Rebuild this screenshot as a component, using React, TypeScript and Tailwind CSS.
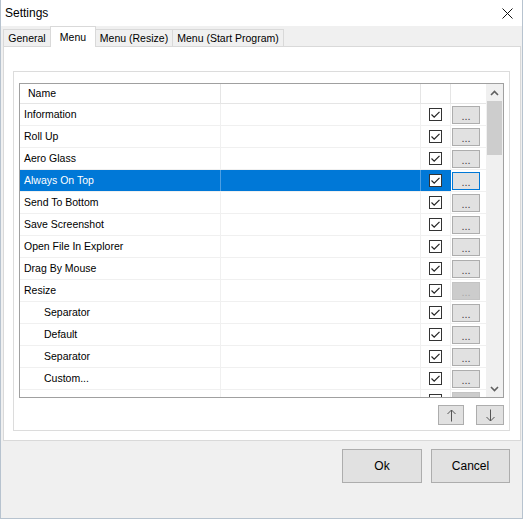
import React from 'react';

type Row = { label: string; indent?: boolean; selected?: boolean; disabled?: boolean; partial?: boolean };

const rows: Row[] = [
  { label: 'Information' },
  { label: 'Roll Up' },
  { label: 'Aero Glass' },
  { label: 'Always On Top', selected: true },
  { label: 'Send To Bottom' },
  { label: 'Save Screenshot' },
  { label: 'Open File In Explorer' },
  { label: 'Drag By Mouse' },
  { label: 'Resize', disabled: true },
  { label: 'Separator', indent: true },
  { label: 'Default', indent: true },
  { label: 'Separator', indent: true },
  { label: 'Custom...', indent: true },
  { label: '', indent: true, disabled: true, partial: true },
];

function CheckBox() {
  return (
    <div className="w-[13px] h-[13px] border border-[#333333] bg-white flex items-center justify-center">
      <svg width="11" height="11" viewBox="0 0 11 11">
        <path d="M1.5 5.5 L4.2 8.2 L9.5 2.8" fill="none" stroke="#222" strokeWidth="1.2" />
      </svg>
    </div>
  );
}

function DotsButton({ selected, disabled, hideText }: { selected?: boolean; disabled?: boolean; hideText?: boolean }) {
  return (
    <div
      className={
        'w-[28px] h-[18px] border flex items-center justify-center text-[11px] leading-none pt-[3px] ' +
        (disabled
          ? 'bg-[#cccccc] border-[#c4c4c4] text-[#a8a8a8]'
          : selected
          ? 'bg-[#e1e1e1] border-[#0078d7] text-[#444]'
          : 'bg-[#e1e1e1] border-[#adadad] text-[#444]')
      }
    >
      {hideText ? '' : '...'}
    </div>
  );
}

function Chevron({ down }: { down?: boolean }) {
  return (
    <svg width="9" height="6" viewBox="0 0 9 6">
      <path
        d={down ? 'M1 1 L4.5 4.5 L8 1' : 'M1 5 L4.5 1.5 L8 5'}
        fill="none"
        stroke="#606060"
        strokeWidth="1.6"
      />
    </svg>
  );
}

function Arrow({ down }: { down?: boolean }) {
  return (
    <svg width="11" height="13" viewBox="0 0 11 13">
      {down ? (
        <>
          <path d="M5.5 0.5 L5.5 12" stroke="#555" strokeWidth="1" fill="none" />
          <path d="M1.5 8 L5.5 12 L9.5 8" stroke="#555" strokeWidth="1" fill="none" />
        </>
      ) : (
        <>
          <path d="M5.5 1 L5.5 12.5" stroke="#555" strokeWidth="1" fill="none" />
          <path d="M1.5 5 L5.5 1 L9.5 5" stroke="#555" strokeWidth="1" fill="none" />
        </>
      )}
    </svg>
  );
}

export default function App() {
  const font = { fontFamily: '"Liberation Sans", Arial, sans-serif' };
  return (
    <div
      className="w-[523px] h-[519px] bg-[#f0f0f0] border border-t-0 border-[#b7c3cf] flex flex-col text-black"
      style={font}
    >
      {/* title bar */}
      <div className="h-[26px] bg-white flex items-center justify-between pl-[4px] pr-[9px] shrink-0">
        <span className="text-[12px]">Settings</span>
        <svg width="11" height="11" viewBox="0 0 11 11">
          <path d="M0.5 0.5 L10.5 10.5 M10.5 0.5 L0.5 10.5" stroke="#111" strokeWidth="1" fill="none" />
        </svg>
      </div>

      {/* tabs */}
      <div className="h-[20px] flex items-end pl-[2px] text-[10.5px] shrink-0 relative z-10">
        <div className="w-[47px] h-[17px] border-l border-t border-[#d9d9d9] flex items-center justify-center pt-[2px]">
          General
        </div>
        <div className="w-[46px] h-[21px] -mb-px bg-white border-l border-r border-t border-[#d9d9d9] flex items-start justify-center pt-[3px]">
          Menu
        </div>
        <div className="w-[76px] h-[17px] border-t border-[#d9d9d9] flex items-center justify-center pt-[2px]">
          Menu (Resize)
        </div>
        <div className="w-[112px] h-[17px] border-l border-r border-t border-[#d9d9d9] flex items-center justify-center pt-[2px]">
          Menu (Start Program)
        </div>
      </div>

      {/* tab page */}
      <div className="ml-[2px] mr-[1px] h-[395px] bg-white border border-[#d9d9d9] shrink-0 pt-[24px] pl-[9px] pr-[10px] pb-[9px] flex flex-col">
        <div className="flex-1 border border-[#dcdcdc] pt-[11px] px-[5px] pb-[5px] flex flex-col">
          {/* list view */}
          <div className="h-[315px] border border-[#a0a0a0] flex text-[10.5px] shrink-0 overflow-hidden">
            <div className="flex-1 flex flex-col overflow-hidden">
              {/* header */}
              <div className="h-[20px] flex border-b border-[#e5e5e5] shrink-0">
                <div className="w-[201px] border-r border-[#e5e5e5] pl-[8px] pt-[1px] flex items-center">Name</div>
                <div className="w-[200px] border-r border-[#e5e5e5]" />
                <div className="w-[30px] border-r border-[#e5e5e5]" />
                <div className="w-[30px]" />
              </div>
              {rows.map((r, i) => (
                <div key={i} className="h-[22px] flex border-b border-[#f0f0f0] shrink-0">
                  <div
                    className={
                      'w-[201px] border-r flex items-center pt-[1px] ' +
                      (r.indent ? 'pl-[24px] ' : 'pl-[4px] ') +
                      (r.selected ? 'bg-[#0078d7] text-white border-[#4d9fe3]' : 'border-[#f0f0f0]')
                    }
                  >
                    {r.label}
                  </div>
                  <div
                    className={
                      'w-[200px] border-r ' +
                      (r.selected ? 'bg-[#0078d7] border-[#4d9fe3]' : 'border-[#f0f0f0]')
                    }
                  />
                  <div
                    className={
                      'w-[30px] border-r flex items-center justify-center ' +
                      (r.selected ? 'bg-[#0078d7] border-[#0078d7]' : 'border-[#f0f0f0]')
                    }
                  >
                    <CheckBox />
                  </div>
                  <div className="w-[30px] flex items-center justify-center">
                    <DotsButton selected={r.selected} disabled={r.disabled} hideText={r.partial} />
                  </div>
                </div>
              ))}
            </div>
            {/* scrollbar */}
            <div className="w-[17px] bg-[#f0f0f0] flex flex-col shrink-0">
              <div className="h-[17px] flex items-center justify-center">
                <Chevron />
              </div>
              <div className="flex-1 px-[1px]">
                <div className="h-[54px] bg-[#cdcdcd]" />
              </div>
              <div className="h-[17px] flex items-center justify-center">
                <Chevron down />
              </div>
            </div>
          </div>
          {/* up / down */}
          <div className="mt-[7px] flex justify-end gap-[12px]">
            <div className="w-[26px] h-[20px] bg-[#e1e1e1] border border-[#adadad] flex items-center justify-center">
              <Arrow />
            </div>
            <div className="w-[28px] h-[20px] bg-[#e1e1e1] border border-[#adadad] flex items-center justify-center">
              <Arrow down />
            </div>
          </div>
        </div>
      </div>

      {/* dialog buttons */}
      <div className="mt-[8px] flex justify-end gap-[9px] pr-[12px] text-[12px]">
        <div className="w-[80px] h-[34px] bg-[#e1e1e1] border border-[#adadad] flex items-center justify-center">
          Ok
        </div>
        <div className="w-[79px] h-[34px] bg-[#e1e1e1] border border-[#adadad] flex items-center justify-center">
          Cancel
        </div>
      </div>
    </div>
  );
}
